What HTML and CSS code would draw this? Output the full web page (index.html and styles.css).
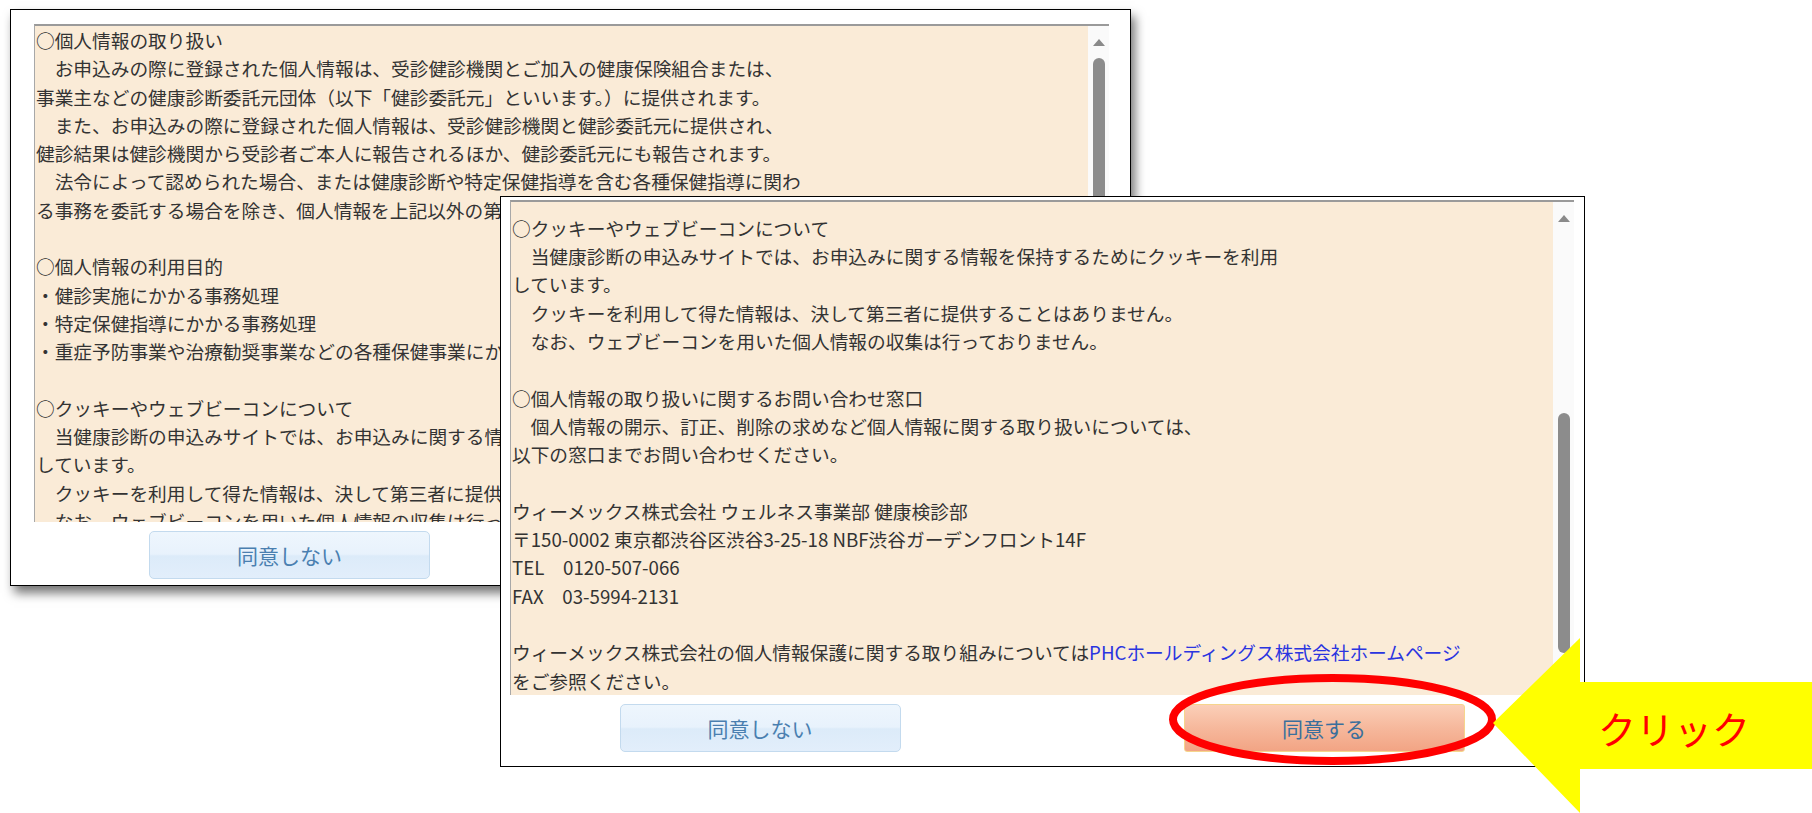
FILE: index.html
```html
<!DOCTYPE html>
<html lang="ja">
<head>
    <meta charset="UTF-8">
    <meta name="viewport" content="width=device-width, initial-scale=1.0">
    <title>個人情報の取り扱いへの同意</title>
    <link rel="stylesheet" href="styles.css">
</head>
<body>
    <div class="canvas">
        <!-- before scrolling -->
        <div class="dialog dialog-back">
            <div class="textbox">
                <div class="text-scroll">
<div class="policy">○個人情報の取り扱い
　お申込みの際に登録された個人情報は、受診健診機関とご加入の健康保険組合または、
事業主などの健康診断委託元団体（以下「健診委託元」といいます。）に提供されます。
　また、お申込みの際に登録された個人情報は、受診健診機関と健診委託元に提供され、
健診結果は健診機関から受診者ご本人に報告されるほか、健診委託元にも報告されます。
　法令によって認められた場合、または健康診断や特定保健指導を含む各種保健指導に関わ
る事務を委託する場合を除き、個人情報を上記以外の第三者に提供することはありません。

○個人情報の利用目的
・健診実施にかかる事務処理
・特定保健指導にかかる事務処理
・重症予防事業や治療勧奨事業などの各種保健事業にかかる事務処理

○クッキーやウェブビーコンについて
　当健康診断の申込みサイトでは、お申込みに関する情報を保持するためにクッキーを利用
しています。
　クッキーを利用して得た情報は、決して第三者に提供することはありません。
　なお、ウェブビーコンを用いた個人情報の収集は行っておりません。

○個人情報の取り扱いに関するお問い合わせ窓口
　個人情報の開示、訂正、削除の求めなど個人情報に関する取り扱いについては、
以下の窓口までお問い合わせください。

ウィーメックス株式会社 ウェルネス事業部 健康検診部
〒150-0002 東京都渋谷区渋谷3-25-18 NBF渋谷ガーデンフロント14F
TEL　0120-507-066
FAX　03-5994-2131

ウィーメックス株式会社の個人情報保護に関する取り組みについては<a href="#">PHCホールディングス株式会社ホームページ</a>
をご参照ください。</div>
                </div>
                <div class="scrollbar">
                    <div class="scroll-btn"><span class="tri-up"></span></div>
                    <div class="scroll-track"><div class="thumb"></div></div>
                    <div class="scroll-btn"><span class="tri-down"></span></div>
                </div>
            </div>
            <div class="buttons">
                <button class="btn btn-decline">同意しない</button>
                <button class="btn btn-agree">同意する</button>
            </div>
        </div>

        <!-- scrolled to the end -->
        <div class="dialog dialog-front">
            <div class="textbox">
                <div class="text-scroll scrolled-end">
<div class="policy">○個人情報の取り扱い
　お申込みの際に登録された個人情報は、受診健診機関とご加入の健康保険組合または、
事業主などの健康診断委託元団体（以下「健診委託元」といいます。）に提供されます。
　また、お申込みの際に登録された個人情報は、受診健診機関と健診委託元に提供され、
健診結果は健診機関から受診者ご本人に報告されるほか、健診委託元にも報告されます。
　法令によって認められた場合、または健康診断や特定保健指導を含む各種保健指導に関わ
る事務を委託する場合を除き、個人情報を上記以外の第三者に提供することはありません。

○個人情報の利用目的
・健診実施にかかる事務処理
・特定保健指導にかかる事務処理
・重症予防事業や治療勧奨事業などの各種保健事業にかかる事務処理

○クッキーやウェブビーコンについて
　当健康診断の申込みサイトでは、お申込みに関する情報を保持するためにクッキーを利用
しています。
　クッキーを利用して得た情報は、決して第三者に提供することはありません。
　なお、ウェブビーコンを用いた個人情報の収集は行っておりません。

○個人情報の取り扱いに関するお問い合わせ窓口
　個人情報の開示、訂正、削除の求めなど個人情報に関する取り扱いについては、
以下の窓口までお問い合わせください。

ウィーメックス株式会社 ウェルネス事業部 健康検診部
〒150-0002 東京都渋谷区渋谷3-25-18 NBF渋谷ガーデンフロント14F
TEL　0120-507-066
FAX　03-5994-2131

ウィーメックス株式会社の個人情報保護に関する取り組みについては<a href="#">PHCホールディングス株式会社ホームページ</a>
をご参照ください。</div>
                </div>
                <div class="scrollbar">
                    <div class="scroll-btn"><span class="tri-up"></span></div>
                    <div class="scroll-track"><div class="thumb"></div></div>
                    <div class="scroll-btn"><span class="tri-down"></span></div>
                </div>
            </div>
            <div class="buttons">
                <button class="btn btn-decline">同意しない</button>
                <button class="btn btn-agree">同意する</button>
            </div>
        </div>

        <!-- annotation -->
        <svg class="mark-circle" width="345" height="110" viewBox="0 0 345 110">
            <ellipse cx="172.5" cy="54.5" rx="159.5" ry="41.5" fill="none" stroke="#ff0000" stroke-width="8"/>
        </svg>
        <div class="callout">
            <svg class="callout-arrow" width="319" height="175" viewBox="0 0 319 175">
                <polygon points="0,85 87,0 87,44 319,44 319,131 87,131 87,175" fill="#ffff00"/>
            </svg>
            <span class="callout-label">クリック</span>
        </div>
    </div>

    <script>
        document.querySelectorAll('.scrolled-end').forEach(function (box) {
            box.scrollTop = box.scrollHeight;
        });
    </script>
</body>
</html>
```

FILE: styles.css
```css
* {
    box-sizing: border-box;
}
body {
    margin: 0;
    background-color: #ffffff;
    font-family: "Noto Sans CJK JP", "Noto Sans", sans-serif;
    overflow: hidden;
}
.canvas {
    position: relative;
    width: 1812px;
    height: 813px;
}

/* dialog windows */
.dialog {
    position: absolute;
    display: flex;
    flex-direction: column;
    background-color: #ffffff;
    border: 1px solid #000000;
}
.dialog-back {
    left: 10px;
    top: 9px;
    width: 1121px;
    height: 577px;
    padding: 14px 21px 0 23px;
    box-shadow: 4px 7px 10px rgba(0, 0, 0, 0.55);
}
.dialog-front {
    left: 500px;
    top: 196px;
    width: 1085px;
    height: 571px;
    padding: 3px 10px 0 9px;
}

/* text area */
.textbox {
    display: flex;
    height: 498px;
    border-top: 2px solid #9a9a9a;
    border-left: 1px solid #a8a8a8;
}
.dialog-front .textbox {
    height: 495px;
}
.text-scroll {
    flex: 1;
    overflow: hidden;
    background-color: #faebd7;
    padding-left: 1px;
}
.policy {
    white-space: pre;
    font-size: 18.7px;
    line-height: 28.3px;
    color: #333333;
}
.policy a {
    color: #2a35e0;
    text-decoration: none;
}

/* scrollbar */
.scrollbar {
    width: 21px;
    background-color: #fafafa;
    display: flex;
    flex-direction: column;
    align-items: center;
}
.scroll-btn {
    height: 32px;
    display: flex;
    align-items: center;
    justify-content: center;
}
.tri-up {
    border-left: 6px solid transparent;
    border-right: 6px solid transparent;
    border-bottom: 7px solid #8a8a8a;
}
.tri-down {
    border-left: 6px solid transparent;
    border-right: 6px solid transparent;
    border-top: 7px solid #8a8a8a;
}
.scroll-track {
    flex: 1;
    display: flex;
    flex-direction: column;
}
.dialog-front .scroll-track {
    justify-content: flex-end;
    padding-bottom: 10px;
}
.thumb {
    width: 12px;
    height: 240px;
    background-color: #8c8c8c;
    border-radius: 6px;
}

/* buttons */
.buttons {
    display: flex;
    justify-content: center;
    gap: 283px;
    margin-top: 9px;
}
.btn {
    width: 281px;
    height: 48px;
    padding: 0;
    font-family: inherit;
    font-size: 21px;
    cursor: pointer;
}
.btn-decline {
    color: #4a7fb0;
    background: linear-gradient(#eef6fd 0%, #e8f2fc 48%, #dcebf9 52%, #e2eefb 100%);
    border: 1px solid #c3daee;
    border-radius: 5px;
}
.btn-agree {
    color: #3a6f9c;
    background: linear-gradient(#fbcfb8 0%, #f6b89c 50%, #f2a484 100%);
    border: 1px solid #f6d58c;
    border-radius: 3px;
}

/* annotation */
.mark-circle {
    position: absolute;
    left: 1160px;
    top: 665px;
}
.callout {
    position: absolute;
    left: 1493px;
    top: 638px;
    width: 319px;
    height: 175px;
}
.callout-arrow {
    display: block;
}
.callout-label {
    position: absolute;
    left: 105px;
    top: 71px;
    font-size: 38px;
    line-height: 1;
    color: #ff0000;
}
```
